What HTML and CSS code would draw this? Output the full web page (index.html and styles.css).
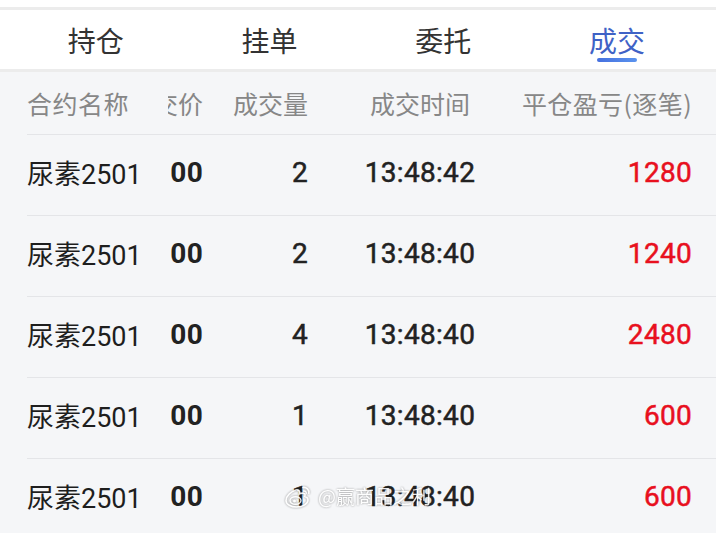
FILE: index.html
```html
<!DOCTYPE html>
<html lang="zh-CN">
<head>
    <meta charset="UTF-8">
    <meta name="viewport" content="width=device-width, initial-scale=1.0">
    <title>成交</title>
    <link rel="stylesheet" href="styles.css">
</head>
<body>
    <div class="status-gap"></div>
    <div class="tabs">
        <div class="tab">持仓</div>
        <div class="tab">挂单</div>
        <div class="tab">委托</div>
        <div class="tab active">成交</div>
    </div>

    <div class="table">
        <div class="row head">
            <div class="cell name">合约名称</div>
            <div class="cell clip"><span>成交价</span></div>
            <div class="cell right">成交量</div>
            <div class="cell center">成交时间</div>
            <div class="cell right">平仓盈亏(逐笔)</div>
        </div>
        <div class="row">
            <div class="cell name">尿素2501</div>
            <div class="cell clip num bold"><span>00</span></div>
            <div class="cell right num">2</div>
            <div class="cell center num">13:48:42</div>
            <div class="cell right num red">1280</div>
        </div>
        <div class="row">
            <div class="cell name">尿素2501</div>
            <div class="cell clip num bold"><span>00</span></div>
            <div class="cell right num">2</div>
            <div class="cell center num">13:48:40</div>
            <div class="cell right num red">1240</div>
        </div>
        <div class="row">
            <div class="cell name">尿素2501</div>
            <div class="cell clip num bold"><span>00</span></div>
            <div class="cell right num">4</div>
            <div class="cell center num">13:48:40</div>
            <div class="cell right num red">2480</div>
        </div>
        <div class="row">
            <div class="cell name">尿素2501</div>
            <div class="cell clip num bold"><span>00</span></div>
            <div class="cell right num">1</div>
            <div class="cell center num">13:48:40</div>
            <div class="cell right num red">600</div>
        </div>
        <div class="row">
            <div class="cell name">尿素2501</div>
            <div class="cell clip num bold"><span>00</span></div>
            <div class="cell right num">1</div>
            <div class="cell center num">13:48:40</div>
            <div class="cell right num red">600</div>
        </div>
    </div>

    <div class="watermark">
        <svg width="30" height="24" viewBox="0 0 30 24">
            <path d="M12 6c-5 1.5-10 6-10 10.5 0 4 5 6.5 10.5 6.5 6.5 0 11.5-3.5 11.5-7 0-2.2-1.8-3.2-3.3-3.6 0.8-1.6 0.6-3.3-2-3.3-1.6 0-3.2 0.8-3.2 0.8 0.5-1.8 0.3-4.6-3.5-3.9z" fill="none" stroke="#fff" stroke-width="1.6"/>
            <ellipse cx="11.5" cy="16.5" rx="5.5" ry="3.8" fill="none" stroke="#fff" stroke-width="1.4"/>
            <circle cx="10.5" cy="17" r="1.5" fill="#fff"/>
            <path d="M19 3.5c3.5-0.6 6.5 2.2 5.8 5.8" fill="none" stroke="#fff" stroke-width="1.6" stroke-linecap="round"/>
            <path d="M19.5 7c1.6-0.3 3 1 2.7 2.6" fill="none" stroke="#fff" stroke-width="1.4" stroke-linecap="round"/>
        </svg>
        <span>@赢商品之利</span>
    </div>
</body>
</html>
```

FILE: styles.css
```css
body {
    margin: 0;
    background-color: #f5f6f8;
    font-family: "Noto Sans CJK SC", "Noto Sans", sans-serif;
    color: #222;
    overflow: hidden;
}
.status-gap {
    height: 7px;
    background-color: #fff;
    border-bottom: 3px solid #ececec;
}
.tabs {
    display: flex;
    height: 59px;
    padding: 0 12px 0 9px;
    background-color: #fff;
    border-bottom: 3px solid #ececec;
}
.tab {
    flex: 1;
    position: relative;
    display: flex;
    align-items: center;
    justify-content: center;
    font-size: 28px;
    color: #333;
}
.tab.active {
    color: #3f62c6;
}
.tab.active::after {
    content: "";
    position: absolute;
    left: 50%;
    bottom: 7px;
    width: 40px;
    height: 4px;
    margin-left: -20px;
    border-radius: 2px;
    background: linear-gradient(90deg, #4670df, #5a93ee);
}
.row {
    display: grid;
    grid-template-columns: 141px 37px 103px 224px minmax(0, 1fr);
    align-items: center;
    height: 75px;
    padding-bottom: 5px;
    margin-left: 27px;
    padding-right: 24px;
    border-top: 1px solid #e4e5e8;
}
.row.head {
    height: 62px;
    padding-bottom: 0;
    border-top: none;
    font-size: 25px;
    color: #878787;
}
.cell {
    white-space: nowrap;
}
.name {
    font-family: Roboto, "Noto Sans CJK SC", sans-serif;
    font-size: 27px;
    color: #1e1e1e;
}
.head .name {
    font-family: "Noto Sans CJK SC", sans-serif;
    font-size: 25px;
    color: #878787;
    letter-spacing: 0.5px;
}
.clip {
    overflow: hidden;
    display: flex;
    justify-content: flex-end;
    padding-right: 2px;
}
.right {
    display: flex;
    justify-content: flex-end;
}
.head .right:last-child {
    letter-spacing: 0.4px;
}
.center {
    text-align: center;
}
.num {
    font-family: Roboto, sans-serif;
    font-size: 28px;
    font-weight: 400;
    -webkit-text-stroke: 0.5px currentColor;
    letter-spacing: 0.3px;
    color: #222;
}
.bold {
    font-weight: 700;
    -webkit-text-stroke: 0;
}
.red {
    color: #e8101e;
}
.watermark {
    position: absolute;
    left: 284px;
    top: 482px;
    display: flex;
    align-items: center;
    gap: 4px;
    opacity: 0.9;
    filter: drop-shadow(0 0 1px rgba(0, 0, 0, 0.45));
}
.watermark span {
    font-size: 19px;
    color: #fff;
}
```
